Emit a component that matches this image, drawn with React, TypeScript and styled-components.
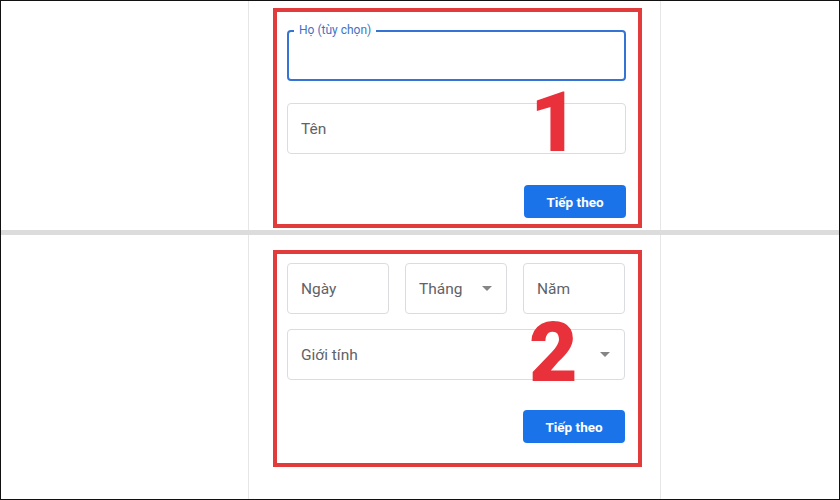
import styled, { createGlobalStyle } from "styled-components"

const GlobalStyle = createGlobalStyle`
  html, body {
    margin: 0;
    padding: 0;
    background: #fff;
  }
  body {
    font-family: Roboto, "Noto Sans", sans-serif;
  }
`

const Field = ({ label, arrow }: { label: string, arrow?: boolean }) => (
  <Box>
    <Placeholder>{label}</Placeholder>
    {arrow && <Arrow />}
  </Box>
)

const App = () => {
  return (
    <Frame>
      <GlobalStyle />
      <Section $top={7}>
        <Column>
          <Highlight $pad="14px 12px 6px 10px">
            <Stack>
              <FocusedBox>
                <FloatLabel>Họ (tùy chọn)</FloatLabel>
              </FocusedBox>
              <Field label="Tên" />
            </Stack>
            <Actions $top={31}>
              <NextButton>Tiếp theo</NextButton>
            </Actions>
            <StepNumber $top={69} $left={253}>1</StepNumber>
          </Highlight>
        </Column>
      </Section>
      <Divider />
      <Section $top={15}>
        <Column>
          <Highlight $pad="5px 13px 20px 10px">
            <Stack $gap={15}>
              <DateRow>
                <Field label="Ngày" />
                <Field label="Tháng" arrow />
                <Field label="Năm" />
              </DateRow>
              <Field label="Giới tính" arrow />
            </Stack>
            <Actions $top={30}>
              <NextButton>Tiếp theo</NextButton>
            </Actions>
            <StepNumber $top={57} $left={252}>2</StepNumber>
          </Highlight>
        </Column>
      </Section>
    </Frame>
  )
}

const Frame = styled.div`
  width: 840px;
  height: 500px;
  box-sizing: border-box;
  border: 1px solid #111;
  display: flex;
  flex-direction: column;
  overflow: hidden;
`

const Section = styled.div<{ $top: number }>`
  flex: 1;
  display: flex;
  &:first-child {
    flex: 0 0 229px;
  }
  & > * {
    padding-top: ${p => p.$top}px;
  }
`

const Column = styled.div`
  margin-left: 247px;
  width: 413px;
  box-sizing: border-box;
  border-left: 1px solid #e6e6e6;
  border-right: 1px solid #e6e6e6;
  padding-left: 24px;
`

const Divider = styled.div`
  flex: 0 0 5px;
  background: #dcdcdc;
`

const Highlight = styled.div<{ $pad: string }>`
  position: relative;
  width: 369px;
  box-sizing: border-box;
  border: 4px solid #e23b3b;
  padding: ${p => p.$pad};
`

const Stack = styled.div<{ $gap?: number }>`
  display: flex;
  flex-direction: column;
  gap: ${p => p.$gap ?? 22}px;
  padding-top: 4px;
`

const Box = styled.div`
  position: relative;
  height: 51px;
  box-sizing: border-box;
  border: 1px solid #dadce0;
  border-radius: 4px;
  display: flex;
  align-items: center;
  padding: 0 13px;
`

const FocusedBox = styled.div`
  position: relative;
  height: 51px;
  box-sizing: border-box;
  border: 2px solid #3574d4;
  border-radius: 4px;
`

const FloatLabel = styled.span`
  position: absolute;
  top: -10px;
  left: 5px;
  padding: 0 5px;
  background: #fff;
  font-size: 12px;
  line-height: 16px;
  color: #3f72c4;
`

const Placeholder = styled.span`
  font-size: 15.5px;
  color: #5f6368;
`

const Arrow = styled.span`
  margin-left: auto;
  margin-right: 1px;
  width: 0;
  height: 0;
  border-left: 5px solid transparent;
  border-right: 5px solid transparent;
  border-top: 5px solid #858585;
`

const DateRow = styled.div`
  display: grid;
  grid-template-columns: repeat(3, 1fr);
  gap: 16px;
`

const Actions = styled.div<{ $top: number }>`
  display: flex;
  justify-content: flex-end;
  margin-top: ${p => p.$top}px;
`

const NextButton = styled.button`
  width: 102px;
  height: 33px;
  border: none;
  border-radius: 4px;
  background: #1a73e8;
  color: #fff;
  font-family: Roboto, "Noto Sans", sans-serif;
  font-weight: 700;
  font-size: 13.5px;
`

const StepNumber = styled.span<{ $top: number, $left: number }>`
  position: absolute;
  top: ${p => p.$top}px;
  left: ${p => p.$left}px;
  font-family: Roboto, "Liberation Sans", sans-serif;
  font-weight: 900;
  font-size: 84px;
  line-height: 1;
  color: #e8313a;
`

export default App
